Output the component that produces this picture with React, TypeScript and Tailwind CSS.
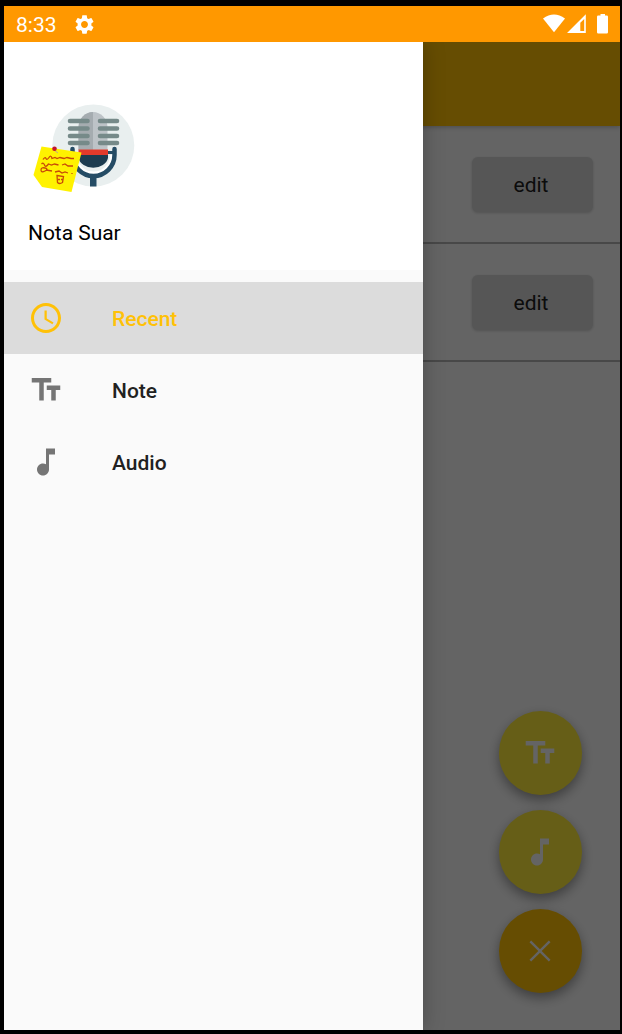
import React from "react";

const NOTE = "M2.5 4v3h5v12h3V7h5V4h-13zm19 5h-9v3h3v7h3v-7h3V9z";
const AUDIO = "M12 3v10.55c-.59-.34-1.27-.55-2-.55-2.21 0-4 1.79-4 4s1.79 4 4 4 4-1.79 4-4V7h4V3h-6z";
const CLOCK =
  "M11.99 2C6.47 2 2 6.48 2 12s4.47 10 9.99 10C17.52 22 22 17.52 22 12S17.52 2 11.99 2zM12 20c-4.42 0-8-3.58-8-8s3.58-8 8-8 8 3.58 8 8-3.58 8-8 8zm.5-13H11v6l5.25 3.15.75-1.23-4.5-2.67z";
const GEAR =
  "M19.14 12.94c.04-.3.06-.61.06-.94 0-.32-.02-.64-.07-.94l2.03-1.58c.18-.14.23-.41.12-.61l-1.92-3.32c-.12-.22-.37-.29-.59-.22l-2.39.96c-.5-.38-1.03-.7-1.62-.94l-.36-2.54c-.04-.24-.24-.41-.48-.41h-3.84c-.24 0-.43.17-.47.41l-.36 2.54c-.59.24-1.13.57-1.62.94l-2.39-.96c-.22-.08-.47 0-.59.22L2.74 8.87c-.12.21-.08.47.12.61l2.03 1.58c-.05.3-.09.63-.09.94s.02.64.07.94l-2.03 1.58c-.18.14-.23.41-.12.61l1.92 3.32c.12.22.37.29.59.22l2.39-.96c.5.38 1.03.7 1.62.94l.36 2.54c.05.24.24.41.48.41h3.84c.24 0 .44-.17.47-.41l.36-2.54c.59-.24 1.13-.56 1.62-.94l2.39.96c.22.08.47 0 .59-.22l1.92-3.32c.12-.22.07-.47-.12-.61l-2.01-1.58zM12 15.6c-1.98 0-3.6-1.62-3.6-3.6s1.62-3.6 3.6-3.6 3.6 1.62 3.6 3.6-1.62 3.6-3.6 3.6z";

function Icon({ d, className }: { d: string; className: string }) {
  return (
    <svg viewBox="0 0 24 24" fill="currentColor" className={className}>
      <path d={d} />
    </svg>
  );
}

function StatusBar() {
  return (
    <div className="flex h-9 shrink-0 items-center bg-[#ff9800] pl-3 text-white">
      <span className="mt-0.5 text-[21px] leading-6">8:33</span>
      <Icon d={GEAR} className="ml-4 size-[23px]" />
      <svg viewBox="0 0 66 20" className="mr-[11px] ml-auto h-5 w-[66px]" fill="currentColor">
        <path d="M0 4.500Q11-3.600 22 4.500L11 18.300Z" />
        <path fillRule="evenodd" d="M24 19L42.800 0.300V19ZM37.300 8.800V17H41.200V5Z" />
        <path d="M57.500 0h4.500v1.500h1.700q1.300 0 1.300 1.300v15.400q0 1.300-1.300 1.300h-8.400q-1.300 0-1.300-1.300V2.800q0-1.300 1.300-1.300H57.500z" />
      </svg>
    </div>
  );
}

function Logo() {
  return (
    <svg viewBox="0 0 110 94" className="h-[94px] w-[110px]">
      <circle cx="65.300" cy="45.500" r="41" fill="#e9efef" />
      <path d="M50.500 50V27.500a14.500 15.500 0 0 1 29 0V50z" fill="#bdc3c7" />
      <path d="M50.500 50V27.500A14.500 15.500 0 0 1 65 12V50z" fill="#a5acb0" />
      <g stroke="#768a89" strokeWidth="4.600" strokeLinecap="round">
        <path d="M42 21H59.500M42 28.500H59.500M42 36H59.500M42 43H59.500" />
        <path d="M72 21H89M72 28.500H89M72 36H89M72 43H89" />
      </g>
      <path d="M50.500 54H80V58a15 12 0 0 1-29.500 0z" fill="#1d3c50" />
      <path d="M50.500 49.500H80V55H50.500z" fill="#e23a2b" />
      <path d="M80 51h5v3h-5z" fill="#254c65" />
      <path d="M47.500 55a18 18 0 0 0 36 0" fill="none" stroke="#fff" strokeWidth="3" />
      <path d="M44.500 49V55a21 21 0 0 0 42 0V49" fill="none" stroke="#254c65" strokeWidth="4.500" strokeLinecap="round" />
      <path d="M62 75h6.500v11.500H62z" fill="#254c65" />
      <path d="M13.500 46.500L53.500 52.500 43.500 92 14 87 5.500 75z" fill="#fff200" />
      <path
        d="M15 59.500q2-3 3-1t3-1 3 1l3-1 2 1 3-1 4 1 3-1 4 1 3 0M13.500 64q2-2 3 1t4-1l3 1 3-1 4 1M34 65l3-1 3 2 5 0M13 70q0-3 4-2t0 3-4-1M18 70l6 1M27 72l4-1 3 2 3-1 3 1M44 73v1"
        fill="none"
        stroke="#c84b08"
        strokeWidth="1.300"
      />
      <path d="M29 75.500l6.500 1-1 6q-3 2-5 0zM30 79.500h2m1 0h2" fill="none" stroke="#c84b08" strokeWidth="1.300" />
      <path d="M26 50l4 3" stroke="#bba98d" />
      <circle cx="26.500" cy="48.800" r="2.300" fill="#c4142d" />
    </svg>
  );
}

function EditRow() {
  return (
    <div className="flex h-[118px] items-start justify-end border-b-2 border-[#b5b5b5] pt-[30.600px] pr-[27.500px]">
      <button className="h-[55px] w-[121px] rounded-[6px] bg-[#d6d7d7] pt-[2.500px] pr-0.5 text-[21px] text-[#202020] shadow-[0_1px_3px_rgba(0,0,0,0.18)]">
        edit
      </button>
    </div>
  );
}

function Fab({ d, color }: { d: string; color: string }) {
  return (
    <div className={`flex size-[83.500px] items-center justify-center rounded-full shadow-[0_5px_12px_rgba(0,0,0,0.38)] ${color}`}>
      <Icon d={d} className="size-9 text-[#fafafa]" />
    </div>
  );
}

function Item({ d, label, active }: { d: string; label: string; active?: boolean }) {
  return (
    <div className={`flex h-[72px] items-center pb-px pl-6 ${active ? "bg-[#dcdcdc] text-[#ffc107]" : "text-[#212121]"}`}>
      <Icon d={d} className={active ? "size-9" : "size-9 text-[#757575]"} />
      <span className="ml-12 pt-0.5 text-[21px] leading-7 font-medium">{label}</span>
    </div>
  );
}

export default function App() {
  return (
    <div className="h-[1034px] w-[622px] bg-black pt-1.5 pr-0.5 pb-1 pl-1 font-[Roboto,sans-serif]">
      <div className="flex h-full flex-col overflow-hidden">
        <StatusBar />
        <div className="relative flex-1 overflow-hidden bg-[#fafafa]">
          <div className="relative h-[84px] bg-[#ffc107] shadow-[0_1px_5px_rgba(0,0,0,0.25)]" />
          <EditRow />
          <EditRow />
          <div className="absolute right-[38px] bottom-[37.500px] flex flex-col gap-[15.500px]">
            <Fab d={NOTE} color="bg-[#ffeb3b]" />
            <Fab d={AUDIO} color="bg-[#ffeb3b]" />
            <Fab
              d="M19 6.100l-1.100-1.100L12 10.900 6.100 5 5 6.100 10.900 12 5 17.900l1.100 1.100L12 13.100l5.900 5.900 1.100-1.100L13.100 12z"
              color="bg-[#ffc107]"
            />
          </div>
          <div className="absolute inset-0 bg-black/60" />
          <aside className="absolute inset-y-0 left-0 w-[419px] bg-[#fafafa] shadow-[0_0_20px_rgba(0,0,0,0.25)]">
            <div className="flex h-[228px] flex-col bg-white pt-[58px] pl-6">
              <Logo />
              <span className="mt-[25px] text-[21px] leading-7 tracking-[-0.05px] text-black">Nota Suar</span>
            </div>
            <nav className="pt-3">
              <Item d={CLOCK} label="Recent" active />
              <Item d={NOTE} label="Note" />
              <Item d={AUDIO} label="Audio" />
            </nav>
          </aside>
        </div>
      </div>
    </div>
  );
}
